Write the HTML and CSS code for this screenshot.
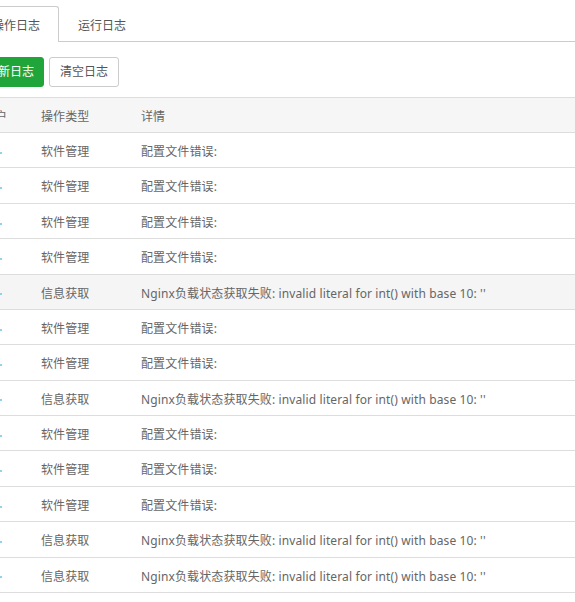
FILE: index.html
```html
<!DOCTYPE html>
<html lang="zh-CN">
<head>
<meta charset="utf-8">
<title>日志</title>
<link rel="stylesheet" href="styles.css">
</head>
<body>
<div class="panel">
  <div class="tabs">
    <span class="tab active">操作日志</span>
    <span class="tab">运行日志</span>
  </div>
  <div class="toolbar">
    <button class="btn btn-green">刷新日志</button>
    <button class="btn btn-default">清空日志</button>
  </div>
  <table class="log">
    <thead>
      <tr><th class="c1">用户</th><th class="c2">操作类型</th><th>详情</th></tr>
    </thead>
    <tbody>
      <tr><td class="c1"><i class="u"></i></td><td>软件管理</td><td>配置文件错误:</td></tr>
      <tr><td class="c1"><i class="u"></i></td><td>软件管理</td><td>配置文件错误:</td></tr>
      <tr><td class="c1"><i class="u"></i></td><td>软件管理</td><td>配置文件错误:</td></tr>
      <tr><td class="c1"><i class="u"></i></td><td>软件管理</td><td>配置文件错误:</td></tr>
      <tr class="hover"><td class="c1"><i class="u"></i></td><td>信息获取</td><td>Nginx负载状态获取失败: invalid literal for int() with base 10: ''</td></tr>
      <tr><td class="c1"><i class="u"></i></td><td>软件管理</td><td>配置文件错误:</td></tr>
      <tr><td class="c1"><i class="u"></i></td><td>软件管理</td><td>配置文件错误:</td></tr>
      <tr><td class="c1"><i class="u"></i></td><td>信息获取</td><td>Nginx负载状态获取失败: invalid literal for int() with base 10: ''</td></tr>
      <tr><td class="c1"><i class="u"></i></td><td>软件管理</td><td>配置文件错误:</td></tr>
      <tr><td class="c1"><i class="u"></i></td><td>软件管理</td><td>配置文件错误:</td></tr>
      <tr><td class="c1"><i class="u"></i></td><td>软件管理</td><td>配置文件错误:</td></tr>
      <tr><td class="c1"><i class="u"></i></td><td>信息获取</td><td>Nginx负载状态获取失败: invalid literal for int() with base 10: ''</td></tr>
      <tr><td class="c1"><i class="u"></i></td><td>信息获取</td><td>Nginx负载状态获取失败: invalid literal for int() with base 10: ''</td></tr>
    </tbody>
  </table>
</div>
</body>
</html>
```
FILE: styles.css
```css
html, body {
  margin: 0;
  padding: 0;
  background: #fff;
  overflow: hidden;
}
body {
  font-family: "Noto Sans", "Noto Sans CJK SC", sans-serif;
  font-size: 12px;
  color: #666;
}
.panel {
  margin-left: -25px;
  width: 640px;
}
.tabs {
  display: flex;
  margin-left: -2px;
  padding-top: 6px;
  border-bottom: 1px solid #ccc;
}
.tab {
  display: block;
  line-height: 38px;
  padding: 0 18px;
  border: 1px solid transparent;
  border-bottom: 0;
  color: #555;
  margin-bottom: -1px;
  height: 35px;
  box-sizing: border-box;
}
.tab.active {
  border-color: #ccc;
  border-radius: 3px 3px 0 0;
  background: #fff;
  height: 36px;
}
.toolbar {
  display: flex;
  gap: 5px;
  margin-top: 15px;
  margin-bottom: 10px;
}
.btn {
  font-family: inherit;
  font-size: 12px;
  height: 30px;
  padding: 0 10px;
  border-radius: 3px;
  border: 1px solid #ccc;
  background: #fff;
  color: #555;
  line-height: 28px;
  margin: 0;
}
.btn-green {
  background: #20a53a;
  border-color: #20a53a;
  color: #fff;
  padding: 0 9px 0 10px;
}
.log {
  width: 100%;
  border-collapse: collapse;
  border-top: 1px solid #ddd;
  letter-spacing: 0.12px;
}
.log th, .log td {
  text-align: left;
  font-weight: normal;
  padding: 10px 8px 6px;
  line-height: 18.38px;
  border-bottom: 1px solid #ddd;
  white-space: nowrap;
}
.log thead th {
  background: #f6f6f6;
  line-height: 18px;
}
.log .c1 {
  width: 42px;
}
.log .c2 {
  width: 84px;
}
.log tr.hover td {
  background: #f5f5f5;
}
.u {
  display: inline-block;
  width: 2px;
  height: 2px;
  margin-left: 17px;
  background: #8fd3ec;
  vertical-align: middle;
}
```
